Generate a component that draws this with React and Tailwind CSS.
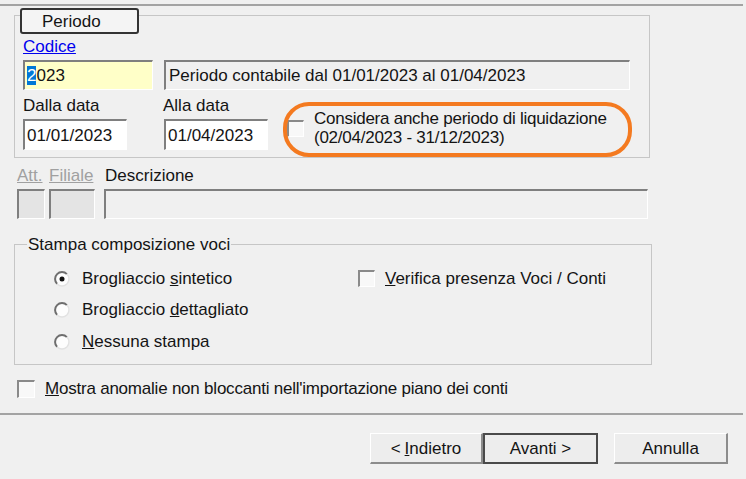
import React from 'react';

const sunken =
  'flex items-center border-t-2 border-l-2 border-t-[#7f7f7f] border-l-[#7f7f7f] border-r border-b border-r-white border-b-white';

function Check({ size = 'w-[17px] h-[17px]' }) {
  return (
    <span
      className={`block shrink-0 ${size} border-t-2 border-l-2 border-t-[#8a8a8a] border-l-[#8a8a8a] border-r border-b border-r-white border-b-white bg-[#f8f8f8]`}
    />
  );
}

function Radio({ checked }) {
  return (
    <svg width="16" height="16" viewBox="0 0 16 16" className="shrink-0">
      <circle cx="8" cy="8" r="7" fill="#fdfdfd" />
      <path d="M3.1 12.9 A6.9 6.9 0 0 1 12.9 3.1" stroke="#6e6e6e" strokeWidth="2" fill="none" />
      <path d="M12.9 3.1 A6.9 6.9 0 0 1 3.1 12.9" stroke="#e2e2e2" strokeWidth="1.4" fill="none" />
      {checked && <circle cx="8" cy="8" r="2.5" fill="#111" />}
    </svg>
  );
}

function Btn({ children, def = false, className = '' }) {
  return (
    <div
      className={`flex h-[31px] items-center justify-center bg-[#ededed] ${
        def
          ? 'border-2 border-[#4a4a4a]'
          : 'border-t border-l border-t-white border-l-white border-r-2 border-b-2 border-r-[#8c8c8c] border-b-[#8c8c8c]'
      } ${className}`}
    >
      {children}
    </div>
  );
}

export default function App() {
  return (
    <div className="w-[746px] h-[479px] overflow-hidden bg-[#f0f0f0] text-[17px] leading-[19px] text-[#141414] font-['Liberation_Sans',Arial,sans-serif]">
      <div className="pt-[4px]">
        <div className="w-[743px] h-[2px] bg-[#a3a3a3]" />
      </div>

      {/* Periodo */}
      <div className="pl-[14px] pt-[9px]">
        <div className="w-[636px] h-[143px] border border-[#c6c6c6] pl-[8px]">
          <div className="-mt-[8px] -ml-[3px] flex h-[26px] w-[119px] items-center rounded-[3px] border-2 border-[#333] bg-[#f4f4f4] pl-[20px]">
            Periodo
          </div>
          <div className="mt-[3px] text-[#0000ee] underline">Codice</div>
          <div className="mt-[4px] flex h-[30px] gap-[11px]">
            <div className={`${sunken} w-[130px] bg-[#ffffc8] pl-[2px]`}>
              <span className="bg-[#0078d7] text-white">2</span>
              <span>023</span>
            </div>
            <div className={`${sunken} w-[466px] bg-[#f0f0f0] pl-[3px]`}>
              Periodo contabile dal 01/01/2023 al 01/04/2023
            </div>
          </div>
          <div className="mt-[6px] flex">
            <div className="w-[104px]">
              <div>Dalla data</div>
              <div className={`${sunken} mt-[4px] h-[31px] w-[104px] bg-white pl-[2px]`}>01/01/2023</div>
            </div>
            <div className="ml-[37px] w-[104px]">
              <div className="-ml-[1px]">Alla data</div>
              <div className={`${sunken} mt-[4px] h-[31px] w-[104px] bg-white pl-[2px]`}>01/04/2023</div>
            </div>
            <div className="relative ml-[19px] flex pt-[13px]">
              <div className="mt-[11px]">
                <Check />
              </div>
              <div className="ml-[10px] tracking-[-0.25px]">
                <div>Considera anche periodo di liquidazione</div>
                <div>(02/04/2023 - 31/12/2023)</div>
              </div>
              <div className="absolute left-[-4px] top-[6px] h-[55px] w-[349px] rounded-[26px] border-[4px] border-[#f47a20]" />
            </div>
          </div>
        </div>
      </div>

      {/* Att / Filiale / Descrizione */}
      <div className="mt-[8px] pl-[17px]">
        <div className="flex">
          <span className="w-[32px] text-[#a0a0a0] underline">Att.</span>
          <span className="w-[56px] text-[#a0a0a0] underline">Filiale</span>
          <span>Descrizione</span>
        </div>
        <div className="mt-[4px] flex h-[30px]">
          <div className={`${sunken} w-[28px] bg-[#e4e4e4]`} />
          <div className={`${sunken} ml-[4px] w-[46px] bg-[#e4e4e4]`} />
          <div className={`${sunken} ml-[9px] w-[544px] bg-[#f0f0f0]`} />
        </div>
      </div>

      {/* Stampa composizione voci */}
      <div className="mt-[25px] pl-[14px]">
        <div className="h-[121px] w-[638px] border border-[#c6c6c6]">
          <div className="-mt-[10px] ml-[12px] w-fit bg-[#f0f0f0] px-[1px]">Stampa composizione voci</div>
          <div className="mt-[15px] flex h-[19px] items-center pl-[39px]">
            <div className="flex w-[304px] items-center">
              <Radio checked />
              <span className="ml-[12px]">
                Brogliaccio <span className="underline">s</span>intetico
              </span>
            </div>
            <Check />
            <span className="ml-[10px]">
              <span className="underline">V</span>erifica presenza Voci / Conti
            </span>
          </div>
          <div className="mt-[12px] flex h-[19px] items-center pl-[39px]">
            <Radio />
            <span className="ml-[12px]">
              Brogliaccio <span className="underline">d</span>ettagliato
            </span>
          </div>
          <div className="mt-[13px] flex h-[19px] items-center pl-[39px]">
            <Radio />
            <span className="ml-[12px]">
              <span className="underline">N</span>essuna stampa
            </span>
          </div>
        </div>
      </div>

      {/* Mostra anomalie */}
      <div className="mt-[14px] flex h-[19px] items-center pl-[17px]">
        <Check size="w-[18px] h-[18px]" />
        <span className="ml-[10px] tracking-[-0.22px]">
          <span className="underline">M</span>ostra anomalie non bloccanti nell'importazione piano dei conti
        </span>
      </div>

      <div className="mt-[15px] h-[2px] w-[743px] bg-[#a3a3a3]" />

      {/* Buttons */}
      <div className="mt-[18px] flex pl-[370px]">
        <Btn className="w-[113px]">
          &lt; <span className="ml-[4px] underline">I</span>ndietro
        </Btn>
        <Btn def className="w-[115px]">
          Avanti &gt;
        </Btn>
        <Btn className="ml-[16px] w-[114px]">Annulla</Btn>
      </div>
    </div>
  );
}
